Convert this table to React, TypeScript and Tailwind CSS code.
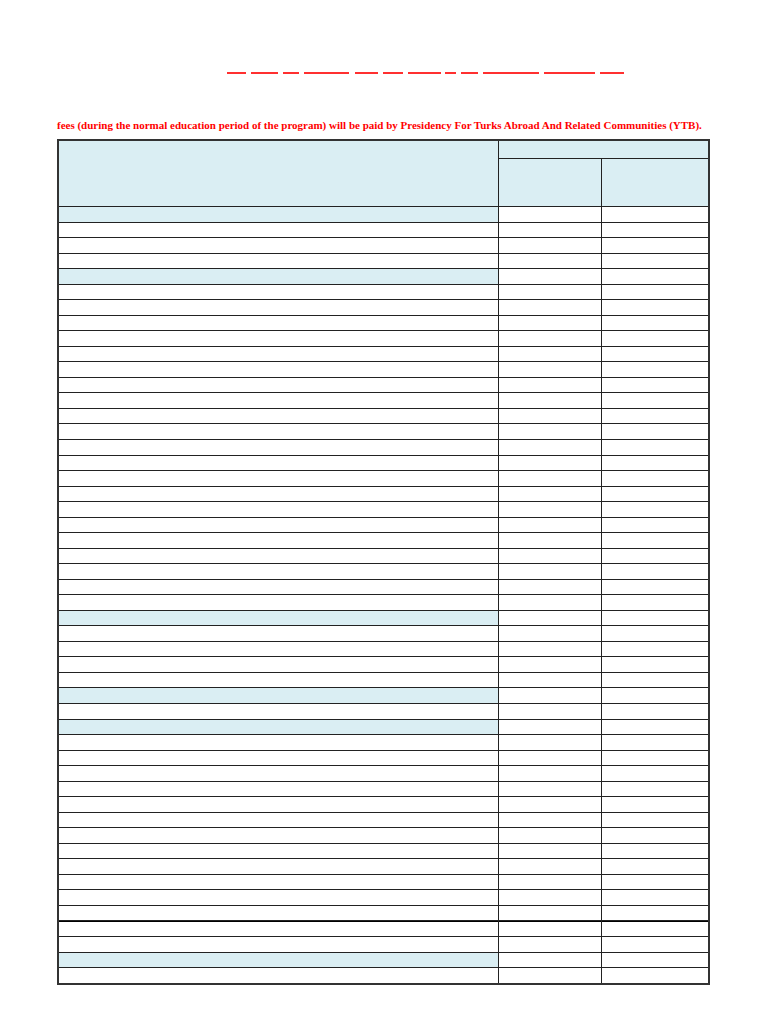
const dashes: [number, number][] = [
  [227, 246], [251, 278], [283, 299], [304, 349], [355, 378], [383, 403],
  [408, 441], [445, 456], [461, 478], [483, 539], [544, 595], [600, 624],
];

// rows that have the light blue fill in the first column
const SHADED = new Set([0, 4, 26, 31, 33, 48]);
const ROWS = 50;

export default function App() {
  return (
    <div className="min-h-screen w-[768px] bg-white font-['Liberation_Serif',serif]">
      <div className="flex h-[74px] items-end pl-[227px]">
        {dashes.map(([a, b], i) => (
          <span
            key={i}
            className="block h-[2px] bg-[#ff3030]"
            style={{ width: b - a, marginLeft: i === 0 ? 0 : a - dashes[i - 1][1] }}
          />
        ))}
      </div>

      <p className="mt-[44px] pl-[57px] text-[11px] font-bold leading-[14px] text-[#ff0000]">
        fees (during the normal education period of the program) will be paid by Presidency For Turks Abroad And Related Communities (YTB).
      </p>

      <div className="ml-[57px] mt-[7px] w-[653px] border-2 border-[#333] bg-[#222]">
        <div className="grid grid-cols-[439px_102px_106px] grid-rows-[17px_47px] gap-px">
          <div className="row-span-2 bg-[#daeef3]" />
          <div className="col-span-2 bg-[#daeef3]" />
          <div className="bg-[#daeef3]" />
          <div className="bg-[#daeef3]" />
        </div>
        <div className="mt-px grid auto-rows-[14.54px] grid-cols-[439px_102px_106px] gap-px">
          {Array.from({ length: ROWS }).map((_, r) => {
            const thick = r === 46 ? 'shadow-[inset_0_1px_0_#000]' : '';
            return [
              <div key={`a${r}`} className={`${SHADED.has(r) ? 'bg-[#daeef3]' : 'bg-white'} ${thick}`} />,
              <div key={`b${r}`} className={`bg-white ${thick}`} />,
              <div key={`c${r}`} className={`bg-white ${thick}`} />,
            ];
          })}
        </div>
      </div>
    </div>
  );
}
